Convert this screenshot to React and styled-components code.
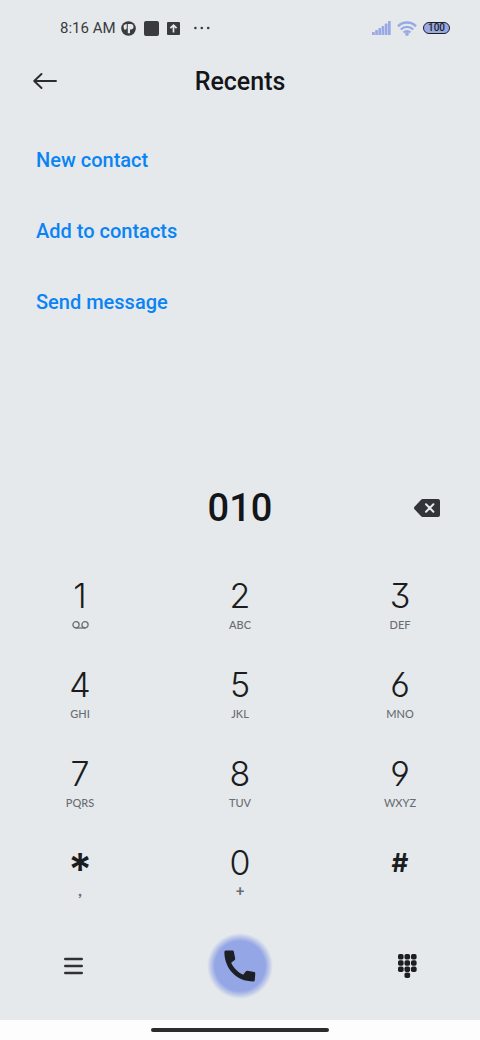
import React from 'react';
import styled, { createGlobalStyle } from 'styled-components';

const keys = [
  { digit: '1', voicemail: true },
  { digit: '2', letters: 'ABC' },
  { digit: '3', letters: 'DEF' },
  { digit: '4', letters: 'GHI' },
  { digit: '5', letters: 'JKL' },
  { digit: '6', letters: 'MNO' },
  { digit: '7', letters: 'PQRS' },
  { digit: '8', letters: 'TUV' },
  { digit: '9', letters: 'WXYZ' },
  { digit: '*', letters: ',', kind: 'star' },
  { digit: '0', letters: '+', kind: 'zero' },
  { digit: '#', letters: '', kind: 'hash' },
];

const links = ['New contact', 'Add to contacts', 'Send message'];

const StatusBar = () => {
  return (
    <Status>
      <StatusGroup $gap={8}>
        <span className="time">8:16 AM</span>
        <svg width="15" height="15" viewBox="0 0 15 15" aria-hidden="true">
          <circle cx="7.5" cy="7.5" r="7.3" fill="#3a3b3d" />
          <path
            d="M2.6 4.6Q3.4 3 5.8 3V6.8Q5.8 9 3.6 8.8Q2.2 7 2.6 4.6ZM6.8 3H9.8a2.7 2.7 0 0 1 0 5.4H9V12.2H6.8z"
            fill="#e5e9ec"
          />
        </svg>
        <svg width="15" height="15" viewBox="0 0 15 15" aria-hidden="true">
          <rect width="15" height="15" rx="2" fill="#3a3b3d" />
        </svg>
        <svg width="13" height="13" viewBox="0 0 13 13" aria-hidden="true">
          <rect width="13" height="13" rx="1" fill="#3a3b3d" />
          <path
            d="M6.5 10.5V3.2M3.4 6.2l3.1-3.1L9.6 6.2"
            fill="none"
            stroke="#e5e9ec"
            strokeWidth="1.7"
          />
        </svg>
        <svg className="dots" width="16" height="4" viewBox="0 0 16 4" aria-hidden="true">
          <g fill="#3a3b3d">
            <circle cx="1.4" cy="2" r="1.3" />
            <circle cx="7.8" cy="2" r="1.3" />
            <circle cx="14.2" cy="2" r="1.3" />
          </g>
        </svg>
      </StatusGroup>
      <StatusGroup $gap={6}>
        <svg width="19" height="14" viewBox="0 0 19 14" aria-hidden="true">
          <g fill="#98a9e4">
            <rect x="0" y="11" width="2.7" height="3" rx=".6" />
            <rect x="3.2" y="9" width="2.7" height="5" rx=".6" />
            <rect x="6.4" y="7" width="2.7" height="7" rx=".6" />
            <rect x="9.6" y="5" width="2.7" height="9" rx=".6" />
            <rect x="12.8" y="2.6" width="2.7" height="11.4" rx=".6" />
            <rect x="16" y="0" width="2.7" height="14" rx=".6" />
          </g>
        </svg>
        <svg width="20" height="15" viewBox="0 0 20 15" aria-hidden="true">
          <g fill="none" stroke="#98a9e4" strokeWidth="2.4">
            <path d="M1 5.3a12.6 12.6 0 0 1 18 0" />
            <path d="M3.8 8.5a8.7 8.7 0 0 1 12.4 0" />
            <path d="M6.6 11.5a4.8 4.8 0 0 1 6.8 0" />
          </g>
          <circle cx="10" cy="13" r="1.9" fill="#98a9e4" />
        </svg>
        <Battery>100</Battery>
      </StatusGroup>
    </Status>
  );
};

const Key = ({ digit, letters, voicemail, kind }) => {
  return (
    <KeyButton type="button">
      <Digit $kind={kind}>{digit}</Digit>
      <Letters $kind={kind}>
        {voicemail ? (
          <svg width="17" height="8" viewBox="0 0 17 8" role="img" aria-label="Voicemail">
            <g fill="none" stroke="#696d71" strokeWidth="1.3">
              <circle cx="4" cy="3.8" r="3.1" />
              <circle cx="13" cy="3.8" r="3.1" />
              <path d="M3.4 7h10.2" />
            </g>
          </svg>
        ) : (
          letters
        )}
      </Letters>
    </KeyButton>
  );
};

const App = () => {
  return (
    <>
      <GlobalStyle />
      <Page>
        <StatusBar />
        <Header>
          <IconButton type="button" aria-label="Back">
            <svg width="24" height="16" viewBox="0 0 24 16">
              <path
                d="M23 8H1.2M8.5 1 1.2 8l7.3 7"
                fill="none"
                stroke="#2b2c2f"
                strokeWidth="1.9"
                strokeLinecap="round"
                strokeLinejoin="round"
              />
            </svg>
          </IconButton>
          <h1>Recents</h1>
        </Header>
        <Links>
          {links.map((text) => (
            <li key={text}>
              <a href="#contact">{text}</a>
            </li>
          ))}
        </Links>
        <NumberRow>
          <output>010</output>
          <IconButton type="button" aria-label="Delete">
            <svg width="26" height="18" viewBox="0 0 26 18">
              <path
                d="M8.6 0H24a2 2 0 0 1 2 2v14a2 2 0 0 1-2 2H8.6a2 2 0 0 1-1.5-.7L.5 10.2a1.8 1.8 0 0 1 0-2.4L7.1.7A2 2 0 0 1 8.6 0z"
                fill="#33343a"
              />
              <path
                d="m12 5.3 7.4 7.4M19.4 5.3 12 12.7"
                stroke="#e5e9ec"
                strokeWidth="2"
                strokeLinecap="round"
              />
            </svg>
          </IconButton>
        </NumberRow>
        <Keypad>
          {keys.map((key) => (
            <Key key={key.digit} {...key} />
          ))}
        </Keypad>
        <Footer>
          <IconButton type="button" aria-label="Menu">
            <svg width="19" height="18" viewBox="0 0 19 18">
              <path
                d="M1.3 2h16.4M1.3 9h16.4M1.3 16h16.4"
                stroke="#303136"
                strokeWidth="2.6"
                strokeLinecap="round"
              />
            </svg>
          </IconButton>
          <CallButton type="button" aria-label="Call">
            <svg width="32" height="32" viewBox="0 0 32 32">
              <path
                d="M.4 1.8Q.6.4 2 .4H8.6Q9.6.4 9.8 1.4L11.2 8.4Q11.3 9.3 10.7 9.9L7.2 12.7C9.5 17.8 14 22.4 19.2 24.8L21.9 21.3Q22.5 20.6 23.4 20.7L30.2 21.9Q31.3 22.1 31.3 23.2L30.8 30Q30.7 31.5 29.3 31.5C12.5 31.5.1 18.3.4 1.8Z"
                fill="#1d1f26"
              />
            </svg>
          </CallButton>
          <IconButton type="button" aria-label="Hide keypad">
            <svg width="19" height="24" viewBox="0 0 19 24">
              <g fill="#1d1e22">
                {[0, 1, 2].map((row) =>
                  [0, 1, 2].map((col) => (
                    <rect
                      key={`${row}-${col}`}
                      x={col * 6.5}
                      y={row * 6.2}
                      width="5.6"
                      height="5.6"
                      rx="1.8"
                    />
                  ))
                )}
                <rect x="6.5" y="18.4" width="5.6" height="5.6" rx="1.8" />
              </g>
            </svg>
          </IconButton>
        </Footer>
        <HomeBar>
          <span />
        </HomeBar>
      </Page>
    </>
  );
};

const GlobalStyle = createGlobalStyle`
  *,
  *::before,
  *::after {
    box-sizing: border-box;
  }

  body {
    margin: 0;
    background: #e5e9ec;
    color: #141518;
    font-family: Roboto, 'Liberation Sans', sans-serif;
  }

  button {
    border: 0;
    padding: 0;
    background: none;
    color: inherit;
    font: inherit;
    cursor: pointer;
  }

  svg {
    display: block;
  }
`;

const Page = styled.main`
  display: flex;
  flex-direction: column;
  min-height: 100vh;
`;

const Status = styled.div`
  display: flex;
  align-items: center;
  justify-content: space-between;
  height: 56px;
  padding: 0 30px 0 60px;
`;

const StatusGroup = styled.div`
  display: flex;
  align-items: center;
  gap: ${({ $gap }) => $gap}px;

  .time {
    margin-right: -3px;
    color: #3a3b3d;
    font-size: 15px;
  }

  .dots {
    margin-left: 6px;
  }
`;

const Battery = styled.span`
  width: 27px;
  height: 12px;
  border: 1px solid #1d1f26;
  border-radius: 6px;
  background: #98a9e4;
  color: #1d1f26;
  font-size: 10px;
  font-weight: 500;
  line-height: 10px;
  text-align: center;
`;

const IconButton = styled.button`
  display: flex;
  align-items: center;
  justify-content: center;
  width: 48px;
  height: 48px;
`;

const Header = styled.header`
  display: grid;
  grid-template-columns: 48px 1fr 48px;
  align-items: center;
  height: 50px;
  padding: 0 21px;

  h1 {
    margin: 0;
    font-size: 25px;
    font-weight: 500;
    text-align: center;
  }
`;

const Links = styled.ul`
  margin: 18px 0 0;
  padding: 0 36px;
  list-style: none;

  li {
    display: flex;
    align-items: center;
    height: 71px;
  }

  a {
    color: #0a84f5;
    font-size: 20px;
    font-weight: 500;
    text-decoration: none;
  }
`;

const NumberRow = styled.div`
  display: grid;
  grid-template-columns: 48px 1fr 48px;
  align-items: center;
  height: 96px;
  margin-top: auto;
  padding: 0 29px;

  output {
    grid-column: 2;
    font-size: 38px;
    font-weight: 500;
    text-align: center;
  }
`;

const Keypad = styled.div`
  display: grid;
  grid-template-columns: repeat(3, 1fr);
`;

const KeyButton = styled.button`
  display: flex;
  flex-direction: column;
  align-items: center;
  height: 89px;
  padding-top: 20px;
`;

const digitStyles = {
  star: 'font-size: 44px; font-weight: 600; line-height: 52px;',
  hash: 'font-size: 26px; font-weight: 700;',
};

const Digit = styled.span`
  height: 40px;
  color: #1b1c20;
  font-family: Inter, Roboto, sans-serif;
  font-feature-settings: 'cv03', 'cv04', 'cv09';
  font-size: 34px;
  font-weight: 300;
  line-height: 40px;
  ${({ $kind }) => digitStyles[$kind]}
`;

const Letters = styled.span`
  display: flex;
  align-items: center;
  height: ${({ $kind }) => ($kind ? '14px' : '18px')};
  color: #696d71;
  font-family: Lato, Roboto, sans-serif;
  font-size: ${({ $kind }) => ($kind ? '15px' : '11px')};
  font-weight: ${({ $kind }) => ($kind ? 900 : 500)};
  line-height: 14px;
`;

const Footer = styled.footer`
  display: grid;
  grid-template-columns: 48px 1fr 48px;
  align-items: center;
  justify-items: center;
  height: 108px;
  padding: 0 49px;
`;

const CallButton = styled.button`
  display: flex;
  align-items: center;
  justify-content: center;
  width: 66px;
  height: 66px;
  border-radius: 50%;
  background: radial-gradient(circle closest-side, #94a6e5 76%, rgba(148, 166, 229, 0) 100%);
`;

const HomeBar = styled.div`
  display: flex;
  align-items: center;
  justify-content: center;
  height: 20px;
  background: #fdfdfd;

  span {
    width: 37%;
    height: 4px;
    border-radius: 2px;
    background: #2b2c2f;
  }
`;

export default App;
